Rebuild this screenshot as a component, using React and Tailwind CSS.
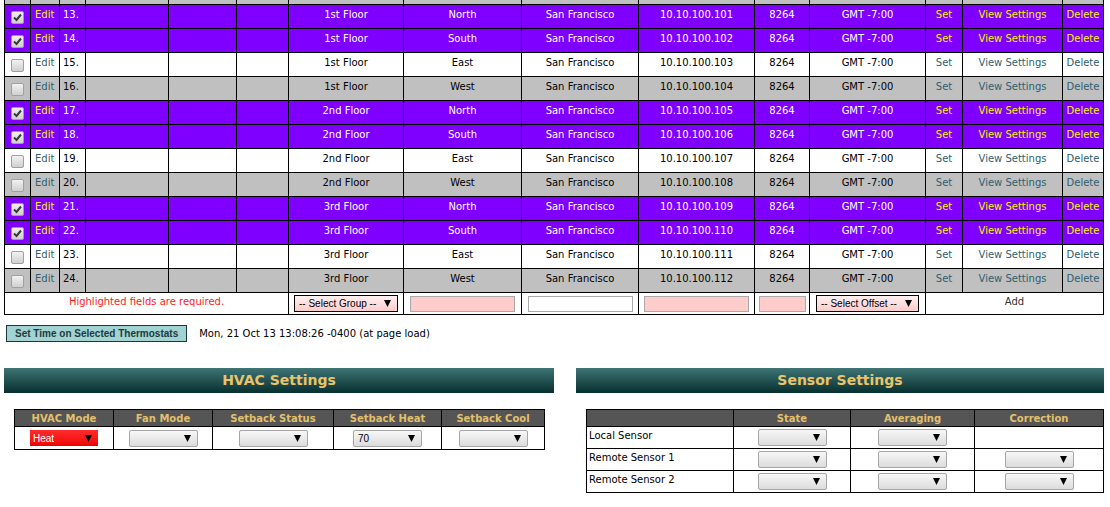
import React from 'react';

const FONT = "font-['DejaVu_Sans',Verdana,sans-serif]";

const rows = [
  { n: 13, group: '1st Floor', loc: 'North', ip: '101', kind: 'on' },
  { n: 14, group: '1st Floor', loc: 'South', ip: '102', kind: 'on' },
  { n: 15, group: '1st Floor', loc: 'East', ip: '103', kind: 'white' },
  { n: 16, group: '1st Floor', loc: 'West', ip: '104', kind: 'gray' },
  { n: 17, group: '2nd Floor', loc: 'North', ip: '105', kind: 'on' },
  { n: 18, group: '2nd Floor', loc: 'South', ip: '106', kind: 'on' },
  { n: 19, group: '2nd Floor', loc: 'East', ip: '107', kind: 'white' },
  { n: 20, group: '2nd Floor', loc: 'West', ip: '108', kind: 'gray' },
  { n: 21, group: '3rd Floor', loc: 'North', ip: '109', kind: 'on' },
  { n: 22, group: '3rd Floor', loc: 'South', ip: '110', kind: 'on' },
  { n: 23, group: '3rd Floor', loc: 'East', ip: '111', kind: 'white' },
  { n: 24, group: '3rd Floor', loc: 'West', ip: '112', kind: 'gray' },
];

const rowStyle = {
  on: { bg: 'bg-[#8000ff]', text: 'text-white', link: 'text-[#f2f200]' },
  white: { bg: 'bg-white', text: 'text-black', link: 'text-[#2f5f6f]' },
  gray: { bg: 'bg-[#c0c0c0]', text: 'text-black', link: 'text-[#2f5f6f]' },
};

const Arrow = () => (
  <svg width="7" height="7" viewBox="0 0 7 7" className="shrink-0">
    <polygon points="0,0 7,0 3.5,7" fill="#000" />
  </svg>
);

const Check = ({ checked }) => (
  <span className="inline-flex w-[13px] h-[13px] items-center justify-center rounded-[2px] border border-[#a0a0a0] bg-linear-to-b from-[#f2f2f2] to-[#d0d0d0] align-middle">
    {checked && (
      <svg width="9" height="9" viewBox="0 0 9 9">
        <path d="M1 4.5 L3.5 7 L8 1.5" stroke="#3a3a3a" strokeWidth="2" fill="none" />
      </svg>
    )}
  </span>
);

const Sel = ({ w, value = '' }) => (
  <div className={`inline-flex h-[17px] items-center justify-between rounded-[2px] border border-[#a6a6a6] bg-linear-to-b from-[#f7f7f7] to-[#dcdcdc] pl-[4px] pr-[6px] align-middle font-['Liberation_Sans',Arial,sans-serif] text-[10px] text-black ${w}`}>
    <span>{value}</span>
    <Arrow />
  </div>
);

const PinkSel = ({ w, label }) => (
  <div className={`inline-flex h-[17px] items-center justify-between border border-black bg-linear-to-b from-[#fff0f0] to-[#ffcccc] pl-[4px] pr-[6px] align-middle font-['Liberation_Sans',Arial,sans-serif] text-[10px] text-black ${w}`}>
    <span>{label}</span>
    <Arrow />
  </div>
);

const Box = ({ w, pink }) => (
  <div className={`inline-block h-[16px] border border-[#a9a9a9] align-middle ${pink ? 'bg-[#ffcccc]' : 'bg-white'} ${w}`} />
);

const td = 'border border-black p-0';
const cell = `${td} text-center align-top pt-[2px]`;

const SectionBar = ({ title }) => (
  <div className="flex h-[25px] items-center justify-center bg-linear-to-b from-[#3f7575] to-[#073030] text-[14px] font-bold text-[#e9c46a]">
    {title}
  </div>
);

const th = 'border border-black bg-[#555555] p-0 text-center text-[10px] font-bold text-[#e4c06a]';

export default function App() {
  return (
    <div className={`${FONT} h-[507px] w-[1110px] overflow-hidden bg-white text-[10px] text-black`}>
      <table className="ml-[4px] -mt-[19px] w-[1100px] table-fixed border-collapse">
        <colgroup>
          <col className="w-[26px]" />
          <col className="w-[29px]" />
          <col className="w-[26px]" />
          <col className="w-[83px]" />
          <col className="w-[68px]" />
          <col className="w-[52px]" />
          <col className="w-[115px]" />
          <col className="w-[118px]" />
          <col className="w-[117px]" />
          <col className="w-[116px]" />
          <col className="w-[55px]" />
          <col className="w-[116px]" />
          <col className="w-[37px]" />
          <col className="w-[100px]" />
          <col className="w-[41px]" />
        </colgroup>
        <tbody>
          {/* row 12, scrolled almost out of view */}
          <tr className="h-[23px] bg-[#c0c0c0]">
            {Array.from({ length: 15 }).map((_, i) => (
              <td key={i} className={td}></td>
            ))}
          </tr>
          {rows.map((r) => {
            const s = rowStyle[r.kind];
            return (
              <tr key={r.n} className={`h-[24px] ${s.bg} ${s.text}`}>
                <td className={`${td} text-center`}>
                  <Check checked={r.kind === 'on'} />
                </td>
                <td className={`${td} pl-[4px] align-top pt-[2px] ${s.link}`}>Edit</td>
                <td className={`${td} pl-[3px] align-top pt-[2px]`}>{r.n}.</td>
                <td className={td}></td>
                <td className={td}></td>
                <td className={td}></td>
                <td className={cell}>{r.group}</td>
                <td className={cell}>{r.loc}</td>
                <td className={cell}>San Francisco</td>
                <td className={cell}>10.10.100.{r.ip}</td>
                <td className={cell}>8264</td>
                <td className={cell}>GMT -7:00</td>
                <td className={`${cell} ${s.link}`}>Set</td>
                <td className={`${cell} ${s.link}`}>View Settings</td>
                <td className={`${cell} ${s.link}`}>Delete</td>
              </tr>
            );
          })}
          <tr className="h-[22px] bg-white">
            <td colSpan={6} className={`${td} text-center align-top pt-[1px] text-[#ff1a1a]`}>
              Highlighted fields are required.
            </td>
            <td className={`${td} text-center`}>
              <PinkSel w="w-[104px]" label="-- Select Group --" />
            </td>
            <td className={`${td} text-center`}>
              <Box w="w-[105px]" pink />
            </td>
            <td className={`${td} text-center`}>
              <Box w="w-[105px]" />
            </td>
            <td className={`${td} text-center`}>
              <Box w="w-[105px]" pink />
            </td>
            <td className={`${td} text-center`}>
              <Box w="w-[47px]" pink />
            </td>
            <td className={`${td} text-center`}>
              <PinkSel w="w-[103px]" label="-- Select Offset --" />
            </td>
            <td colSpan={3} className={`${td} text-center align-top pt-[1px] text-[#333]`}>
              Add
            </td>
          </tr>
        </tbody>
      </table>

      <div className="mt-[10px] flex items-center pl-[6px]">
        <button className="h-[17px] border border-[#163a3a] bg-[#a2d2d2] px-[8px] font-['Liberation_Sans',Arial,sans-serif] text-[10px] font-bold leading-none text-[#1c3c3c]">
          Set Time on Selected Thermostats
        </button>
        <span className="ml-[12px]">Mon, 21 Oct 13 13:08:26 -0400 (at page load)</span>
      </div>

      <div className="mt-[26px] flex pl-[4px]">
        <div className="w-[550px]">
          <SectionBar title="HVAC Settings" />
          <table className="ml-[10px] mt-[16px] w-[530px] table-fixed border-collapse">
            <colgroup>
              <col className="w-[99px]" />
              <col className="w-[99px]" />
              <col className="w-[121px]" />
              <col className="w-[108px]" />
              <col className="w-[103px]" />
            </colgroup>
            <thead>
              <tr className="h-[17px]">
                <th className={th}>HVAC Mode</th>
                <th className={th}>Fan Mode</th>
                <th className={th}>Setback Status</th>
                <th className={th}>Setback Heat</th>
                <th className={th}>Setback Cool</th>
              </tr>
            </thead>
            <tbody>
              <tr className="h-[23px]">
                <td className={`${td} text-center`}>
                  <div className="inline-flex h-[16px] w-[68px] items-center justify-between bg-linear-to-b from-[#ff2a2a] to-[#f00000] pl-[3px] pr-[6px] align-middle font-['Liberation_Sans',Arial,sans-serif] text-[10px] text-white">
                    <span>Heat</span>
                    <Arrow />
                  </div>
                </td>
                <td className={`${td} text-center`}>
                  <Sel w="w-[69px]" />
                </td>
                <td className={`${td} text-center`}>
                  <Sel w="w-[69px]" />
                </td>
                <td className={`${td} text-center`}>
                  <Sel w="w-[69px]" value="70" />
                </td>
                <td className={`${td} text-center`}>
                  <Sel w="w-[69px]" />
                </td>
              </tr>
            </tbody>
          </table>
        </div>

        <div className="ml-[22px] w-[528px]">
          <SectionBar title="Sensor Settings" />
          <table className="ml-[10px] mt-[16px] w-[517px] table-fixed border-collapse">
            <colgroup>
              <col className="w-[147px]" />
              <col className="w-[117px]" />
              <col className="w-[124px]" />
              <col className="w-[129px]" />
            </colgroup>
            <thead>
              <tr className="h-[17px]">
                <th className={th}></th>
                <th className={th}>State</th>
                <th className={th}>Averaging</th>
                <th className={th}>Correction</th>
              </tr>
            </thead>
            <tbody>
              {['Local Sensor', 'Remote Sensor 1', 'Remote Sensor 2'].map((name, i) => (
                <tr key={name} className="h-[22px]">
                  <td className={`${td} pl-[2px] align-top pt-[1px]`}>{name}</td>
                  <td className={`${td} text-center`}>
                    <Sel w="w-[69px]" />
                  </td>
                  <td className={`${td} text-center`}>
                    <Sel w="w-[69px]" />
                  </td>
                  <td className={`${td} text-center`}>
                    {i > 0 && <Sel w="w-[69px]" />}
                  </td>
                </tr>
              ))}
            </tbody>
          </table>
        </div>
      </div>
    </div>
  );
}
